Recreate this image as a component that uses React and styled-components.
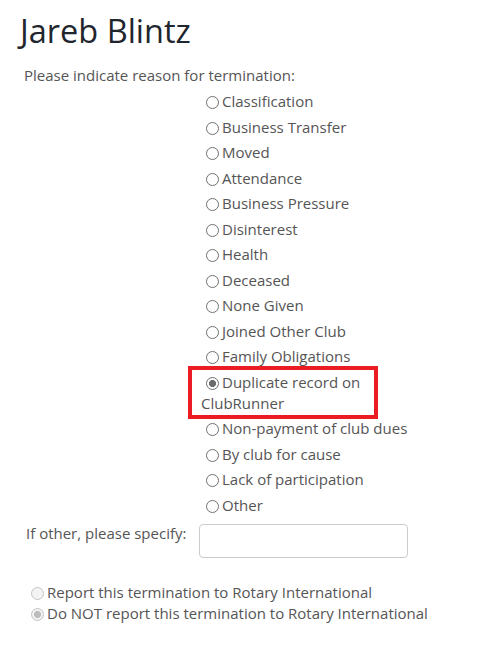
import React from "react";
import styled, { createGlobalStyle } from "styled-components";

const Global = createGlobalStyle`
  html, body { margin: 0; padding: 0; background: #fff; }
  body { font-family: "Open Sans", "DejaVu Sans", sans-serif; color: #555; font-size: 15px; }
`;

const Page = styled.div`
  padding: 13px 0 0 20px;
`;

const Title = styled.h1`
  margin: 0;
  font-size: 32.5px;
  line-height: 36px;
  font-weight: 400;
  color: #1f262d;
`;

const Prompt = styled.p`
  margin: 16px 0 0 4px;
  line-height: 20px;
`;

const Grid = styled.div`
  display: grid;
  grid-template-columns: 175px 210px;
  margin: 4px 0 0 6px;
`;

const List = styled.ul`
  grid-column: 2;
  list-style: none;
  margin: 0;
  padding: 0;
`;

const Item = styled.li`
  position: relative;
  line-height: 21px;
  padding: 2.25px 0;
`;

const Highlight = styled.span`
  position: absolute;
  left: -13px;
  top: -4px;
  width: 190px;
  bottom: -3px;
  border: 4px solid #ec1c24;
  box-sizing: border-box;
  pointer-events: none;
`;

const Radio = styled.input.attrs({ type: "radio" })`
  appearance: none;
  -webkit-appearance: none;
  width: 13px;
  height: 13px;
  margin: 0 3px 0 5px;
  vertical-align: -2px;
  border-radius: 50%;
  box-sizing: border-box;
  border: 1px solid ${(p) => (p.disabled ? "#c4c4c4" : "#6f6f6f")};
  background: ${(p) => (p.disabled ? "#f3f3f3" : "#fff")};
  position: relative;
  &:checked {
    background: radial-gradient(
      circle,
      ${(p) => (p.disabled ? "#bdbdbd" : "#6b6b6b")} 0 3.3px,
      ${(p) => (p.disabled ? "#f3f3f3" : "#fff")} 3.8px
    );
  }
`;

const OtherLabel = styled.label`
  grid-column: 1;
  line-height: 20px;
  margin-top: 5px;
`;

const TextInput = styled.input`
  grid-column: 2;
  margin: 6px 0 0 -2px;
  width: 209px;
  height: 34px;
  box-sizing: border-box;
  border: 1px solid #ccc;
  border-radius: 4px;
  padding: 6px 10px;
  font: inherit;
`;

const Report = styled.div`
  margin: 24px 0 0 6px;
  line-height: 21px;
  color: #555;
`;

const ReportRow = styled.label`
  display: block;
`;

const reasons = [
  "Classification",
  "Business Transfer",
  "Moved",
  "Attendance",
  "Business Pressure",
  "Disinterest",
  "Health",
  "Deceased",
  "None Given",
  "Joined Other Club",
  "Family Obligations",
  "Duplicate record on ClubRunner",
  "Non-payment of club dues",
  "By club for cause",
  "Lack of participation",
  "Other",
];

export default function App() {
  return (
    <Page>
      <Global />
      <Title>Jareb Blintz</Title>
      <Prompt>Please indicate reason for termination:</Prompt>
      <Grid>
        <List>
          {reasons.map((r) => {
            const sel = r.startsWith("Duplicate");
            return (
              <Item key={r}>
                {sel && <Highlight />}
                <Radio name="reason" defaultChecked={sel} readOnly />
                {r}
              </Item>
            );
          })}
        </List>
        <OtherLabel>If other, please specify:</OtherLabel>
        <TextInput type="text" />
      </Grid>
      <Report>
        <ReportRow>
          <Radio name="report" disabled />
          Report this termination to Rotary International
        </ReportRow>
        <ReportRow>
          <Radio name="report" disabled defaultChecked />
          Do NOT report this termination to Rotary International
        </ReportRow>
      </Report>
    </Page>
  );
}
